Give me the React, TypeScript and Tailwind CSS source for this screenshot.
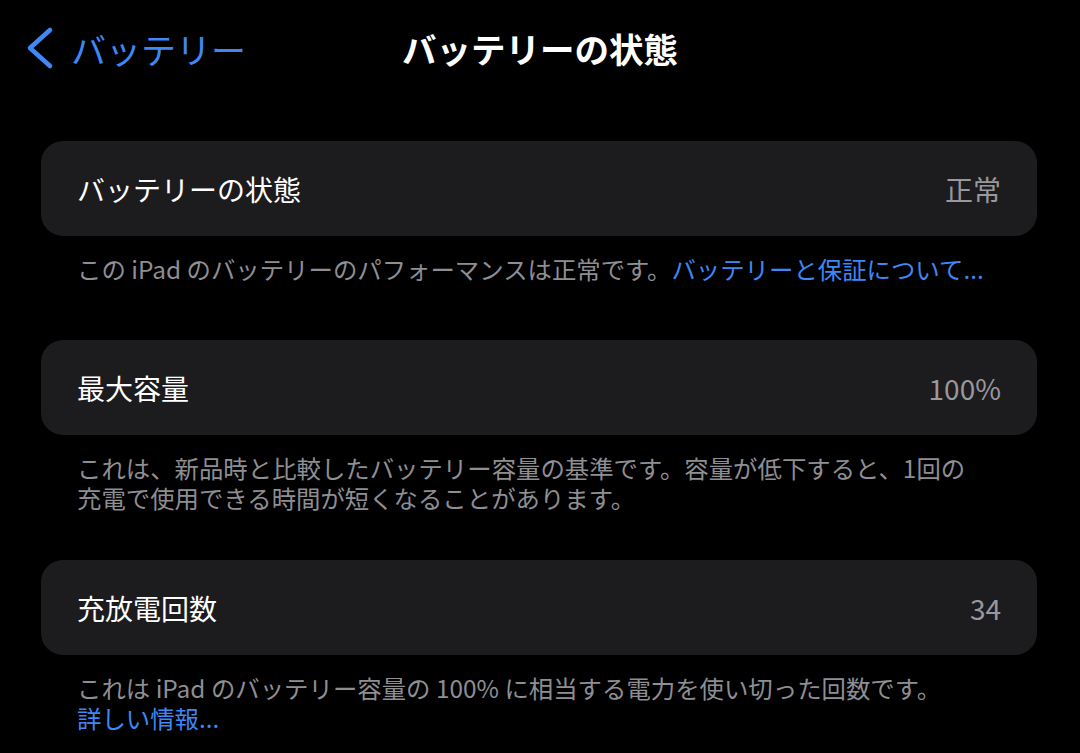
const font = {
  fontFamily: '"Noto Sans CJK JP", "Noto Sans", sans-serif',
};

type Row = {
  label: string;
  value: string;
  gap: string;
  note: React.ReactNode;
};

const rows: Row[] = [
  {
    label: "バッテリーの状態",
    value: "正常",
    gap: "mb-[56px]",
    note: (
      <>
        この iPad のバッテリーのパフォーマンスは正常です。
        <span className="text-[#3e87f4]">バッテリーと保証について...</span>
      </>
    ),
  },
  {
    label: "最大容量",
    value: "100%",
    gap: "mb-[47px]",
    note: (
      <>
        これは、新品時と比較したバッテリー容量の基準です。容量が低下すると、1回の
        <br />
        充電で使用できる時間が短くなることがあります。
      </>
    ),
  },
  {
    label: "充放電回数",
    value: "34",
    gap: "mb-0",
    note: (
      <>
        これは iPad のバッテリー容量の 100% に相当する電力を使い切った回数です。
        <br />
        <span className="text-[#3e87f4]">詳しい情報...</span>
      </>
    ),
  },
];

export default function App() {
  return (
    <div className="w-[1080px] h-[753px] overflow-hidden bg-black text-white" style={font}>
      {/* nav bar */}
      <div className="grid grid-cols-[1fr_auto_1fr] items-center h-[96px] px-[25px]">
        <div className="flex items-center text-[#3e87f4]">
          <svg width="30" height="44" viewBox="0 0 30 44" fill="none">
            <polyline
              points="25,4 5,22 25,40"
              stroke="currentColor"
              strokeWidth="4.6"
              strokeLinecap="round"
              strokeLinejoin="round"
            />
          </svg>
          <span className="ml-[16px] text-[35px] leading-none">バッテリー</span>
        </div>
        <div className="text-[34.5px] font-bold leading-none">バッテリーの状態</div>
        <div />
      </div>

      <div className="flex flex-col pl-[41px] pr-[43px] pt-[45px]">
        {rows.map((r) => (
          <div key={r.label} className={r.gap}>
            <div className="flex h-[95px] items-center justify-between rounded-[22px] bg-[#1c1c1e] px-[36px] text-[28px]">
              <span>{r.label}</span>
              <span className="text-[#98989e]">{r.value}</span>
            </div>
            <div className="mt-[18px] px-[36px] text-[24.4px] leading-[30px] text-[#8e8e93]">
              {r.note}
            </div>
          </div>
        ))}
      </div>
    </div>
  );
}
